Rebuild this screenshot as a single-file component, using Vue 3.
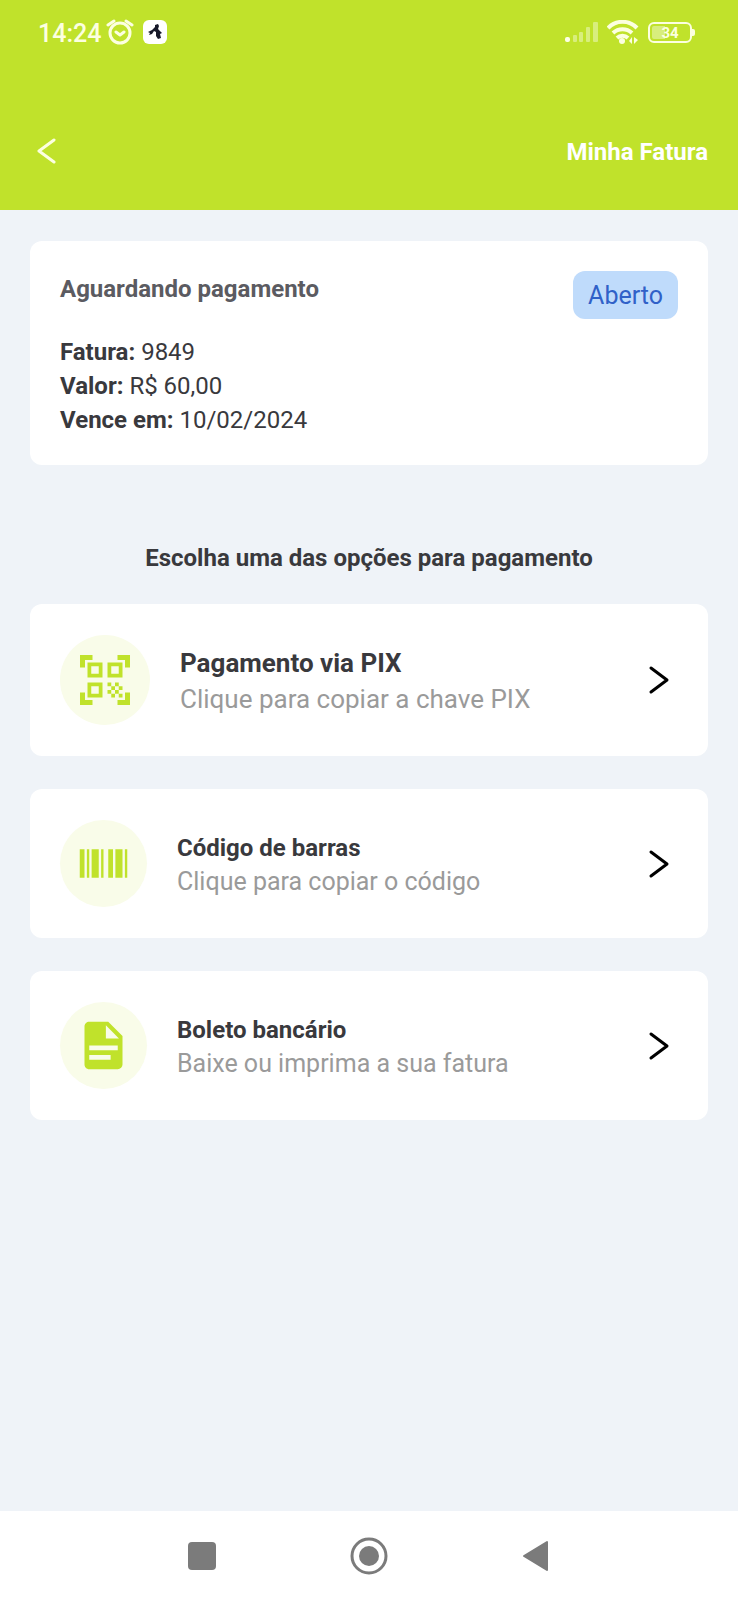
<script setup>
const invoice = [
  { label: 'Fatura:', value: '9849' },
  { label: 'Valor:', value: 'R$ 60,00' },
  { label: 'Vence em:', value: '10/02/2024' },
]

const options = [
  {
    title: 'Pagamento via PIX',
    text: 'Clique para copiar a chave PIX',
    large: true,
    icon: 'M5 5v6h6V5zM6.500 6.500h3v3h-3zM5 13v6h6v-6zM6.500 14.500h3v3h-3zM13 5v6h6V5zM14.500 6.500h3v3h-3zM13 13h1.500v1.500H13zM14.500 14.500H16V16h-1.500zM16 13h1.500v1.500H16zM13 16h1.500v1.500H13zM14.500 17.500H16V19h-1.500zM16 16h1.500v1.500H16zM17.500 14.500H19V16h-1.500zM17.500 17.500H19V19h-1.500zM22 7h-2V4h-3V2h5zM22 22v-5h-2v3h-3v2zM2 22h5v-2H4v-3H2zM2 2v5h2V4h3V2z',
  },
  {
    title: 'Código de barras',
    text: 'Clique para copiar o código',
    large: false,
    icon: 'M2 6h2v12H2zM5 6h1v12H5zM7 6h3v12H7zM11 6h1v12h-1zM14 6h2v12h-2zM17 6h3v12h-3zM21 6h1v12h-1z',
  },
  {
    title: 'Boleto bancário',
    text: 'Baixe ou imprima a sua fatura',
    large: false,
    icon: 'M13 9h5.500L13 3.500zM6 2h8l6 6v12a2 2 0 0 1-2 2H6c-1.110 0-2-.9-2-2V4c0-1.110.89-2 2-2m9 16v-2H6v2zm3-4v-2H6v2z',
  },
]
</script>

<template>
  <div class="screen">
    <header class="top">
      <div class="status">
        <div class="status-side">
          <span class="time">14:24</span>
          <svg class="alarm" width="28" height="26" viewBox="0 0 28 26" aria-hidden="true">
            <circle cx="14" cy="14" r="10" />
            <path d="M10 13l4 3 4-3M2 6l6-4M26 6l-6-4" />
          </svg>
          <svg class="app-badge" width="24" height="24" viewBox="0 0 24 24" aria-hidden="true">
            <rect width="24" height="24" rx="6" fill="#fff" />
            <path d="M12 5l3-1 1 2-1 3 3 3 1 1-2 1 1 4-3 1-2-3 0-4-2-1-2 3-3 1 1-2-2-1 4-2 3-3z" fill="#171929" />
          </svg>
        </div>
        <div class="status-side">
          <svg width="34" height="24" viewBox="0 0 34 24" aria-hidden="true">
            <g fill="#d8ee7d">
              <rect x="8" y="15" width="4" height="7" rx="1" />
              <rect x="14" y="12" width="4" height="10" rx="1" />
              <rect x="21" y="7" width="4" height="15" rx="1" />
              <rect x="28" y="2" width="5" height="20" rx="1" />
            </g>
            <rect x="0" y="17" width="5" height="5" rx="2" fill="#fdffe6" />
          </svg>
          <svg class="wifi" width="32" height="24" viewBox="0 0 32 24" aria-hidden="true">
            <g fill="none" stroke="#fcffe0" stroke-width="4">
              <path d="M1 8a20 20 0 0 1 29 0" />
              <path d="M6 13a14 14 0 0 1 19 0" />
              <path d="M10 18a8 8 0 0 1 11 0" />
            </g>
            <circle cx="15" cy="21" r="3" fill="#fcffe0" />
            <path d="M25 17v7l-3-3zM27 17v7l4-4z" fill="#fcffe0" />
          </svg>
          <span class="battery">34</span>
        </div>
      </div>
      <div class="bar">
        <button class="back" type="button" aria-label="Voltar">
          <svg width="20" height="30" viewBox="0 0 20 30" aria-hidden="true">
            <path d="M18 4L3 15l15 11" fill="none" stroke="#fcffe0" stroke-width="3" stroke-linecap="round" stroke-linejoin="round" />
          </svg>
        </button>
        <h1>Minha Fatura</h1>
      </div>
    </header>

    <main class="content">
      <section class="card invoice">
        <div class="invoice-head">
          <h2>Aguardando pagamento</h2>
          <span class="tag">Aberto</span>
        </div>
        <p v-for="row in invoice" :key="row.label"><strong>{{ row.label }}</strong> {{ row.value }}</p>
      </section>

      <h2 class="heading">Escolha uma das opções para pagamento</h2>

      <div class="options">
        <button
          v-for="option in options"
          :key="option.title"
          type="button"
          class="card option"
          :class="{ large: option.large }"
        >
          <span class="disc">
            <svg viewBox="0 0 24 24" aria-hidden="true">
              <path :d="option.icon" fill="#c0e22b" fill-rule="evenodd" />
            </svg>
          </span>
          <span class="label">
            <strong>{{ option.title }}</strong>
            <span>{{ option.text }}</span>
          </span>
          <svg class="chevron" width="38" height="38" viewBox="0 0 38 38" aria-hidden="true">
            <path d="M11 7l16 12-16 12" fill="none" stroke="#000" stroke-width="3" stroke-linecap="round" stroke-linejoin="round" />
          </svg>
        </button>
      </div>
    </main>

    <nav class="system">
      <button type="button" aria-label="Recentes">
        <svg width="40" height="40" viewBox="0 0 40 40"><rect x="6" y="6" width="28" height="28" rx="4" fill="#7b7b7b" /></svg>
      </button>
      <button type="button" aria-label="Início">
        <svg width="40" height="40" viewBox="0 0 40 40">
          <circle cx="20" cy="20" r="17" fill="none" stroke="#7b7b7b" stroke-width="3" />
          <circle cx="20" cy="20" r="10" fill="#7b7b7b" />
        </svg>
      </button>
      <button type="button" aria-label="Voltar">
        <svg width="40" height="40" viewBox="0 0 40 40">
          <path d="M8 20L31 6v28z" fill="#7b7b7b" stroke="#7b7b7b" stroke-width="2" stroke-linejoin="round" />
        </svg>
      </button>
    </nav>
  </div>
</template>

<style>
body {
  margin: 0;
}
</style>

<style scoped>
.screen {
  display: flex;
  flex-direction: column;
  min-height: 100vh;
  background: #eff3f8;
  color: #39393d;
  font: 24px/34px Roboto, sans-serif;
}

h1,
h2,
p {
  margin: 0;
  font-size: 24px;
}

button {
  padding: 0;
  border: 0;
  background: none;
  color: inherit;
  font: inherit;
  cursor: pointer;
}

svg {
  display: block;
}

.top {
  background: #c0e22b;
  color: #fff;
}

.status {
  display: flex;
  justify-content: space-between;
  align-items: center;
  height: 64px;
  padding: 0 46px 0 38px;
}

.status-side {
  display: flex;
  align-items: center;
}

.time {
  padding-top: 3px;
  color: #fcffe0;
  font-size: 25px;
  font-weight: 500;
}

.alarm {
  margin-left: 5px;
  fill: none;
  stroke: #fcffe0;
  stroke-width: 3;
  stroke-linecap: round;
  stroke-linejoin: round;
}

.app-badge {
  margin-left: 9px;
}

.wifi {
  margin-left: 8px;
}

.battery {
  position: relative;
  box-sizing: border-box;
  width: 44px;
  height: 21px;
  margin-left: 9px;
  border: 2px solid #fcffe0;
  border-radius: 6px;
  background: linear-gradient(90deg, #d8ee7d 36%, transparent 36%) content-box;
  padding: 2px;
  color: #fcffe0;
  font-size: 15px;
  font-weight: 700;
  line-height: 15px;
  text-align: center;
}

.battery::after {
  content: '';
  position: absolute;
  top: 5px;
  right: -5px;
  width: 3px;
  height: 7px;
  border-radius: 0 2px 2px 0;
  background: #fcffe0;
}

.bar {
  display: flex;
  justify-content: space-between;
  align-items: center;
  padding: 68px 30px 41px 36px;
}

.bar h1 {
  padding-top: 3px;
}

.content {
  flex: 1;
  padding: 31px 30px 32px;
}

.card {
  border-radius: 12px;
  background: #fff;
}

.invoice {
  padding: 30px 30px 28px;
}

.invoice-head {
  display: flex;
  justify-content: space-between;
  align-items: flex-start;
  padding-bottom: 16px;
}

.invoice-head h2 {
  padding-top: 1px;
  color: #5b5b61;
}

.tag {
  padding: 8px 15px 6px;
  border-radius: 12px;
  background: #bfdbfb;
  color: #3061c8;
  font-size: 25px;
}

.heading {
  padding: 76px 0 29px;
  text-align: center;
}

.options {
  display: grid;
  gap: 33px;
}

.option {
  display: flex;
  align-items: center;
  gap: 30px;
  padding: 31px 30px;
  text-align: left;
}

.disc {
  flex: none;
  box-sizing: border-box;
  width: 87px;
  height: 87px;
  padding: 15px;
  border-radius: 50%;
  background: #f9fce9;
}

.label {
  display: grid;
  flex: 1;
  padding-top: 2px;
}

.label span {
  color: #9a9a9a;
  font-size: 25px;
}

.large {
  font-size: 26px;
  line-height: 36px;
}

.large .label span {
  font-size: 26px;
}

.large .disc {
  width: 90px;
  height: 90px;
}

.chevron {
  flex: none;
}

.system {
  display: flex;
  height: 89px;
  padding: 0 118px;
  background: #fff;
}

.system button {
  display: grid;
  flex: 1;
  place-items: center;
}
</style>
